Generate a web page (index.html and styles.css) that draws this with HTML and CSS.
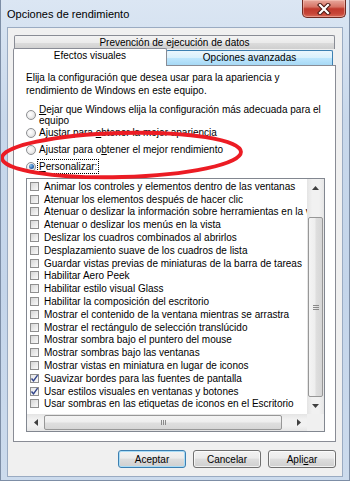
FILE: index.html
```html
<!DOCTYPE html>
<html lang="es">
<head>
<meta charset="utf-8">
<title>Opciones de rendimiento</title>
<link rel="stylesheet" href="styles.css">
</head>
<body>
<div class="window">
  <div class="titlebar">
    <span class="title">Opciones de rendimiento</span>
    <div class="close">
      <svg width="16" height="12" viewBox="0 0 16 12">
        <path d="M4 2 L12 10 M12 2 L4 10" stroke="#4a1812" stroke-width="4.2" stroke-linecap="square"/>
        <path d="M4 2 L12 10 M12 2 L4 10" stroke="#ffffff" stroke-width="2.2" stroke-linecap="square"/>
      </svg>
    </div>
  </div>
  <div class="client">
    <div class="tabs">
      <div class="tabrow row1">
        <div class="tab back">Prevención de ejecución de datos</div>
      </div>
      <div class="tabrow row2">
        <div class="tab selected">Efectos visuales</div>
        <div class="tab hover">Opciones avanzadas</div>
      </div>
      <div class="panel">
        <p class="intro">Elija la configuración que desea usar para la apariencia y<br>rendimiento de Windows en este equipo.</p>
        <div class="radios">
          <div class="radio r1"><span class="rb"></span><span class="rl"><u>D</u>ejar que Windows elija la configuración más adecuada para el<br>equipo</span></div>
          <div class="radio r2"><span class="rb"></span><span class="rl">Ajustar para <u>o</u>btener la mejor apariencia</span></div>
          <div class="radio r3"><span class="rb"></span><span class="rl">Ajustar para o<u>b</u>tener el mejor rendimiento</span></div>
          <div class="radio r4"><span class="rb on"></span><span class="rl focus"><u>P</u>ersonalizar:</span></div>
        </div>
        <div class="listbox">
          <ul class="items">
            <li><span class="cb"></span>Animar los controles y elementos dentro de las ventanas</li>
            <li><span class="cb"></span>Atenuar los elementos después de hacer clic</li>
            <li><span class="cb"></span>Atenuar o deslizar la información sobre herramientas en la vista</li>
            <li><span class="cb"></span>Atenuar o deslizar los menús en la vista</li>
            <li><span class="cb"></span>Deslizar los cuadros combinados al abrirlos</li>
            <li><span class="cb"></span>Desplazamiento suave de los cuadros de lista</li>
            <li><span class="cb"></span>Guardar vistas previas de miniaturas de la barra de tareas</li>
            <li><span class="cb"></span>Habilitar Aero Peek</li>
            <li><span class="cb"></span>Habilitar estilo visual Glass</li>
            <li><span class="cb"></span>Habilitar la composición del escritorio</li>
            <li><span class="cb"></span>Mostrar el contenido de la ventana mientras se arrastra</li>
            <li><span class="cb"></span>Mostrar el rectángulo de selección translúcido</li>
            <li><span class="cb"></span>Mostrar sombra bajo el puntero del mouse</li>
            <li><span class="cb"></span>Mostrar sombras bajo las ventanas</li>
            <li><span class="cb"></span>Mostrar vistas en miniatura en lugar de iconos</li>
            <li><span class="cb checked"><svg width="9" height="9" viewBox="0 0 9 9"><path d="M1.5 4.5 L3.5 6.8 L7.6 1.2" stroke="#31448a" stroke-width="1.4" fill="none"/></svg></span>Suavizar bordes para las fuentes de pantalla</li>
            <li><span class="cb checked"><svg width="9" height="9" viewBox="0 0 9 9"><path d="M1.5 4.5 L3.5 6.8 L7.6 1.2" stroke="#31448a" stroke-width="1.4" fill="none"/></svg></span>Usar estilos visuales en ventanas y botones</li>
            <li><span class="cb"></span>Usar sombras en las etiquetas de iconos en el Escritorio</li>
          </ul>
          <div class="vscroll">
            <div class="sbtn"><svg width="7" height="4" viewBox="0 0 7 4"><polygon points="0,4 3.5,0 7,4" fill="#404040"/></svg></div>
            <div class="vtrack-top"></div>
            <div class="vthumb"><span class="grip-h"></span></div>
            <div class="sbtn"><svg width="7" height="4" viewBox="0 0 7 4"><polygon points="0,0 3.5,4 7,0" fill="#404040"/></svg></div>
          </div>
          <div class="hscroll">
            <div class="sbtn"><svg width="4" height="7" viewBox="0 0 4 7"><polygon points="4,0 0,3.5 4,7" fill="#404040"/></svg></div>
            <div class="hthumb"><span class="grip-v"></span></div>
            <div class="htrack-end"></div>
            <div class="sbtn"><svg width="4" height="7" viewBox="0 0 4 7"><polygon points="0,0 4,3.5 0,7" fill="#404040"/></svg></div>
          </div>
          <div class="corner"></div>
        </div>
      </div>
    </div>
    <div class="buttons">
      <button class="btn default">Aceptar</button>
      <button class="btn">Cancelar</button>
      <button class="btn">Apli<u>c</u>ar</button>
    </div>
  </div>
  <svg class="mark" width="350" height="481" viewBox="0 0 350 481">
    <ellipse cx="120.5" cy="155" rx="119.5" ry="22" transform="rotate(-1.5 120.5 155)" fill="none" stroke="#ec1c24" stroke-width="3.8"/>
  </svg>
</div>
</body>
</html>
```

FILE: styles.css
```css
* { box-sizing: border-box; }

html, body {
  margin: 0;
  padding: 0;
}

body {
  width: 350px;
  height: 481px;
  overflow: hidden;
  font-family: "Liberation Sans", Arial, sans-serif;
  font-size: 10px;
  color: #000;
  background: #c9d8ea;
}

.window {
  position: relative;
  width: 350px;
  height: 481px;
  border: 1px solid #7d8ea6;
  border-top: 0;
  background: linear-gradient(180deg, #dbe6f3 0%, #c8d8eb 25%, #c4d5ea 60%, #ccdbed 100%);
}

.titlebar {
  height: 27px;
  display: flex;
  align-items: flex-start;
}

.title {
  padding-left: 6px;
  line-height: 29px;
  font-size: 11px;
  color: #000;
}

.close {
  margin-left: auto;
  margin-right: 3px;
  width: 44px;
  height: 18px;
  border: 1px solid #6e2a22;
  border-top: 0;
  border-radius: 0 0 5px 5px;
  background: linear-gradient(180deg, #e8a89c 0%, #d77466 40%, #c0392c 52%, #c74638 80%, #d86a58 100%);
  display: flex;
  align-items: center;
  justify-content: center;
  box-shadow: inset 0 0 0 1px rgba(255, 210, 200, 0.45);
}

.client {
  margin: 0 6px 0 6px;
  height: 450px;
  background: #f0f0f0;
  border: 1px solid #9aabc2;
  padding: 7px 6px 0 5px;
}

.tabs {
  width: 323px;
}

.tabrow {
  display: flex;
}

.tab {
  text-align: center;
  white-space: nowrap;
}

.row1 {
  padding: 0 1px;
  height: 13px;
}

.tab.back {
  flex: 1;
  height: 14px;
  line-height: 13px;
  border: 1px solid #898c95;
  border-bottom: 0;
  border-radius: 2px 2px 0 0;
  background: linear-gradient(180deg, #f3f3f3 0%, #ebebeb 50%, #dddddd 51%, #cfcfcf 100%);
}

.row2 {
  height: 17px;
  align-items: flex-start;
}

.tab.selected {
  position: relative;
  z-index: 2;
  width: 154px;
  height: 18px;
  line-height: 14px;
  background: #fff;
  border: 1px solid #898c95;
  border-bottom: 0;
  border-radius: 2px 2px 0 0;
}

.tab.hover {
  width: 167px;
  height: 15px;
  margin-top: 2px;
  margin-left: -1px;
  line-height: 14px;
  border: 1px solid #3c7fb1;
  border-bottom: 0;
  border-radius: 2px 2px 0 0;
  background: linear-gradient(180deg, #eaf6fd 0%, #d9f0fc 50%, #bee6fd 51%, #a7d9f5 100%);
}

.panel {
  height: 377px;
  background: #fff;
  border: 1px solid #898c95;
  padding: 5px 10px 0 12px;
}

.intro {
  margin: 0;
  line-height: 13px;
}

.radios {
  margin-top: 7px;
}

.radio {
  display: flex;
  align-items: center;
  line-height: 13px;
}

.radio.r1 { line-height: 11px; }
.radio.r3, .radio.r4 { margin-top: 4px; }

.rb {
  flex: none;
  width: 10px;
  height: 10px;
  margin-right: 3px;
  border-radius: 50%;
  border: 1px solid #8d8f92;
  background: radial-gradient(circle at 40% 40%, #ffffff 0%, #eeeeee 45%, #cfcfcf 100%);
  position: relative;
}

.rb.on::after {
  content: "";
  position: absolute;
  left: 1.5px;
  top: 1.5px;
  width: 5px;
  height: 5px;
  border-radius: 50%;
  background: radial-gradient(circle at 35% 35%, #8cc4ee 0%, #2f6db5 55%, #143f7a 100%);
}

.rl.focus {
  outline: 1px dotted #000;
  outline-offset: 0;
  padding: 0 1px;
  margin-left: -1px;
}

.listbox {
  margin-top: 5px;
  width: 299px;
  height: 254px;
  border: 1px solid #828790;
  display: grid;
  grid-template-columns: 1fr 17px;
  grid-template-rows: 1fr 17px;
}

.items {
  list-style: none;
  margin: 0;
  padding: 1px 0 0 0;
  overflow: hidden;
  min-width: 0;
}

.items li {
  height: 12.8px;
  display: flex;
  align-items: center;
  white-space: nowrap;
  padding-left: 3px;
}

.cb {
  flex: none;
  width: 9px;
  height: 9px;
  margin-right: 5px;
  border: 1px solid #8f8f8f;
  background: linear-gradient(135deg, #d6d6d6 0%, #ececec 60%, #fafafa 100%);
  display: flex;
  align-items: center;
  justify-content: center;
}

.cb svg { display: block; margin: -1px; }

.cb.checked {
  background: linear-gradient(135deg, #e9e9e9 0%, #f7f7f7 100%);
}

.vscroll {
  display: flex;
  flex-direction: column;
  background: linear-gradient(90deg, #e4e4e4 0%, #f1f1f1 30%, #f1f1f1 70%, #e6e6e6 100%);
}

.hscroll {
  display: flex;
  background: linear-gradient(180deg, #e4e4e4 0%, #f1f1f1 30%, #f1f1f1 70%, #e6e6e6 100%);
}

.sbtn {
  flex: none;
  width: 17px;
  height: 17px;
  display: flex;
  align-items: center;
  justify-content: center;
}

.sbtn svg { display: block; }

.vtrack-top { height: 21px; flex: none; }

.vthumb {
  flex: 1;
  margin: 0 1px;
  border: 1px solid #979797;
  border-radius: 2px;
  background: linear-gradient(90deg, #f4f4f4 0%, #eeeeee 45%, #dedede 55%, #d6d6d6 100%);
  display: flex;
  align-items: center;
  justify-content: center;
}

.grip-h {
  width: 6px;
  height: 5px;
  border-top: 1px solid #8a8a8a;
  border-bottom: 1px solid #8a8a8a;
  position: relative;
}

.grip-h::after {
  content: "";
  position: absolute;
  left: 0;
  right: 0;
  top: 1px;
  border-top: 1px solid #8a8a8a;
}

.hthumb {
  width: 238px;
  flex: none;
  margin: 1px 0;
  border: 1px solid #979797;
  border-radius: 2px;
  background: linear-gradient(180deg, #f4f4f4 0%, #eeeeee 45%, #dedede 55%, #d6d6d6 100%);
  display: flex;
  align-items: center;
  justify-content: center;
}

.grip-v {
  width: 5px;
  height: 5px;
  border-left: 1px solid #8a8a8a;
  border-right: 1px solid #8a8a8a;
  position: relative;
}

.grip-v::after {
  content: "";
  position: absolute;
  top: 0;
  bottom: 0;
  left: 1px;
  border-left: 1px solid #8a8a8a;
}

.htrack-end { flex: 1; }

.corner {
  background: #f0f0f0;
}

.buttons {
  display: flex;
  justify-content: flex-end;
  gap: 7px;
  margin-top: 8px;
  padding-right: 0;
}

.btn {
  width: 68px;
  height: 18px;
  padding: 0;
  font-family: "Liberation Sans", Arial, sans-serif;
  font-size: 10px;
  color: #000;
  border: 1px solid #707070;
  border-radius: 3px;
  background: linear-gradient(180deg, #f2f2f2 0%, #ebebeb 45%, #dddddd 50%, #cfcfcf 100%);
  box-shadow: inset 0 0 0 1px rgba(255, 255, 255, 0.7);
}

.btn.default {
  border-color: #3c7fb1;
  box-shadow: inset 0 0 0 1px #a9dcf6;
}

.mark {
  position: absolute;
  left: 0;
  top: 0;
  pointer-events: none;
}
```
